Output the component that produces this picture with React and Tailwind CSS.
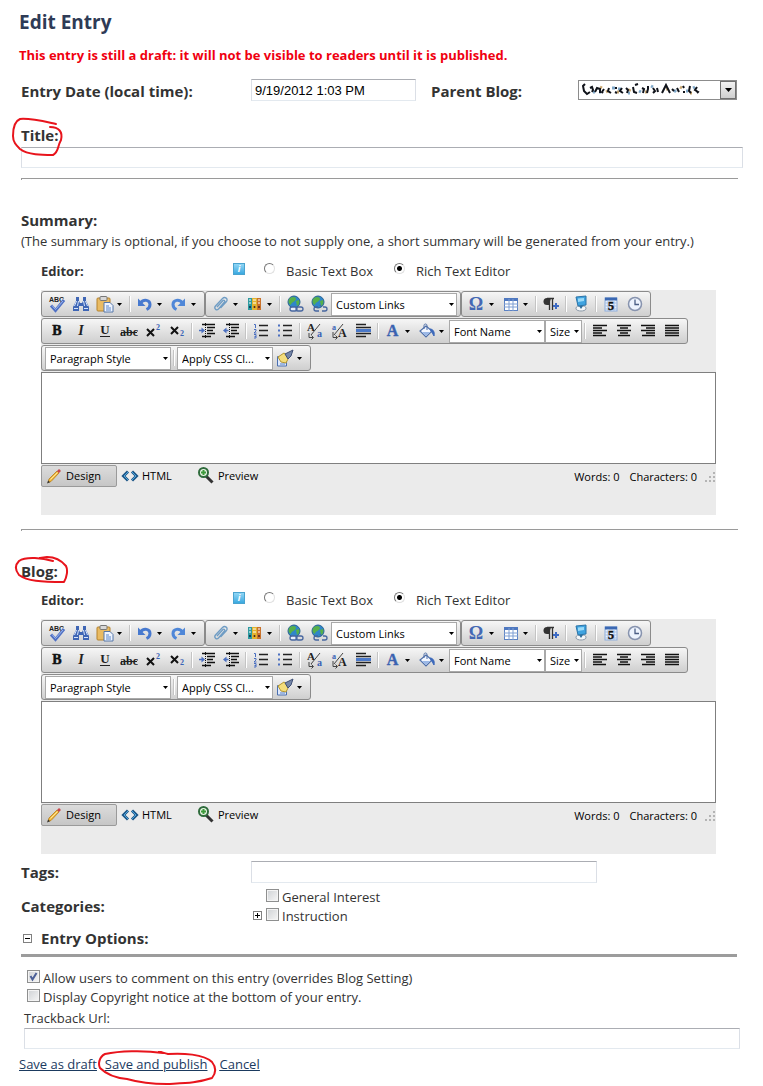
import { useState } from "react";

const serif = { fontFamily: '"Liberation Serif", serif' };

const icons = {
  spell: (
    <>
      <text x="1" y="7" fontSize="7" fontWeight="bold" fill="#222" style={{ fontFamily: '"Liberation Sans", sans-serif' }}>ABC</text>
      <path d="M3 10.5 7.5 15.5 16 5" fill="none" stroke="#4f70c4" strokeWidth="3" />
      <path d="M4 10.5 7.5 14.5 15 6" fill="none" stroke="#9db7ec" strokeWidth="1" />
    </>
  ),
  find: (
    <>
      <path d="M4 2h3v4l1 2h2l1-2V2h3v4l3 6v4h-6v-5H7v5H1v-4l3-6z" fill="#3f66b5" />
      <path d="M4.500 6 2.500 11M6.500 6 5.500 11M11.500 6l1 5M13.500 6l2 5M2 13.500h4M12 13.500h4" stroke="#d6e4fb" strokeWidth="1" />
    </>
  ),
  paste: (
    <>
      <rect x="1" y="3" width="13" height="13" rx="1" fill="#e9bb63" stroke="#b5822c" />
      <rect x="4" y="1.500" width="7" height="4" rx="1" fill="#d8d8d8" stroke="#777" />
      <path d="M8 7.500h6l3 3V17H8z" fill="#eef4ff" stroke="#5577a8" />
      <path d="M10 11h3M10 13h5M10 15h5" stroke="#5b86c9" />
    </>
  ),
  undo: (
    <>
      <path d="M4.500 8C8 3.500 14 5 14 9.500c0 2.500-1.500 4-3.500 5" fill="none" stroke="#4779cf" strokeWidth="3" />
      <path d="M2 3.500V11h7.500z" fill="#4779cf" />
    </>
  ),
  redo: (
    <>
      <path d="M12.500 8C9 3.500 3 5 3 9.500c0 2.500 1.500 4 3.500 5" fill="none" stroke="#4f87d8" strokeWidth="3" />
      <path d="M15 3.500V11H7.500z" fill="#4f87d8" />
    </>
  ),
  clip: (
    <path d="M5 12 11 5.500c1-1 2.500.3 1.500 1.500L6.500 14C4.500 16 1.500 13.500 3.500 11L10.500 3.500C13 1 16.500 4 14.500 6.500L8.500 13" fill="none" stroke="#6e9cc4" strokeWidth="1.300" />
  ),
  library: (
    <>
      <rect x="2" y="3" width="4" height="12" fill="#2d9aa0" />
      <rect x="6" y="3" width="5" height="12" fill="#e2b32d" />
      <rect x="11" y="3" width="4" height="12" fill="#c9722c" />
      <path d="M3 5h2M7 5h3M12 5h2M3 8h2M7 8h3M12 8h2" stroke="#fff" />
      <circle cx="4" cy="12" r="1" fill="#124" />
      <circle cx="8.500" cy="12" r="1" fill="#422" />
      <circle cx="13" cy="12" r="1" fill="#422" />
    </>
  ),
  link: (
    <>
      <circle cx="8" cy="7" r="6" fill="#2f86c9" stroke="#27608f" />
      <path d="M4 3c3-2 6-1 6 1S6 7 4.500 10C2 8 2 5 4 3zM10 6l3-1c1 3 0 5-2 6z" fill="#57b04a" />
      <rect x="4" y="12" width="7" height="4" rx="2" fill="#e8eefb" stroke="#46659f" strokeWidth="1.300" />
      <rect x="10" y="12" width="7" height="4" rx="2" fill="none" stroke="#46659f" strokeWidth="1.300" />
    </>
  ),
  unlink: (
    <>
      <circle cx="8" cy="7" r="6" fill="#2f86c9" stroke="#27608f" />
      <path d="M4 3c3-2 6-1 6 1S6 7 4.500 10C2 8 2 5 4 3zM10 6l3-1c1 3 0 5-2 6z" fill="#57b04a" />
      <path d="M8 12H6a2 2 0 0 0 0 4h3M13 12h2a2 2 0 0 1 0 4h-3M10 10l1 1.500" fill="none" stroke="#46659f" strokeWidth="1.300" />
    </>
  ),
  omega: <text x="8" y="15" fontSize="18" fontWeight="bold" textAnchor="middle" fill="#4468b4" style={serif}>Ω</text>,
  table: (
    <>
      <rect x="2.500" y="3.500" width="13" height="12" fill="#fff" stroke="#5c82c3" />
      <path d="M2 4.500h14" stroke="#4f78c0" strokeWidth="3" />
      <path d="M2 9h14M2 12h14M7 4v12M11 4v12" stroke="#7e9fd3" />
    </>
  ),
  paragraph: (
    <>
      <path d="M9 3H5a3.500 3.500 0 0 0 0 7h2z" fill="#333" />
      <path d="M7.500 3v12M10.500 3v12M5 3.500h7" stroke="#333" strokeWidth="1.300" />
      <path d="M14 8v6M11 11h6" stroke="#3c6ac4" strokeWidth="2" />
    </>
  ),
  module: (
    <>
      <path d="M4 13c0-3 10-3 10 0 1 4-11 4-10 0z" fill="#f4f6f8" stroke="#8c9aa8" />
      <path d="m4 2 10-1v9l-8 1z" fill="#3fa3e0" stroke="#2b74a8" />
      <path d="m6 3.500 6-.5v3l-6 1z" fill="#9adaf8" />
      <path d="m7 11 2 3 2-3z" fill="#2d6f9d" />
    </>
  ),
  calendar: (
    <>
      <rect x="3" y="3" width="12" height="13" fill="#e7effb" stroke="#8daddc" />
      <path d="M3 4h12" stroke="#3b68b3" strokeWidth="3" />
      <path d="M3 8h12M3 11h12M3 14h12M6 5v11M12 5v11" stroke="#a9c1e5" />
      <text x="9" y="15" fontSize="12" fontWeight="bold" textAnchor="middle" fill="#111" stroke="#111" strokeWidth=".4" style={serif}>5</text>
    </>
  ),
  clock: (
    <>
      <circle cx="9" cy="9" r="6.500" fill="#edf3fd" stroke="#8793ae" strokeWidth="1.500" />
      <path d="M9 4.500V9.500h4" fill="none" stroke="#4b5e85" strokeWidth="1.300" />
    </>
  ),
  bold: <text x="9" y="13" fontSize="14" fontWeight="bold" textAnchor="middle" fill="#111" stroke="#111" strokeWidth=".5" style={serif}>B</text>,
  italic: <text x="9" y="13" fontSize="14" fontStyle="italic" fontWeight="bold" textAnchor="middle" fill="#222" style={serif}>I</text>,
  underline: (
    <>
      <text x="9" y="12" fontSize="13" fontWeight="bold" textAnchor="middle" fill="#222" style={serif}>U</text>
      <path d="M4 14.500h10" stroke="#222" />
    </>
  ),
  strike: (
    <>
      <text x="9" y="14" fontSize="12" fontWeight="bold" textAnchor="middle" fill="#222" style={serif}>abc</text>
      <path d="M1 10.500h16" stroke="#222" />
    </>
  ),
  sup: (
    <>
      <path d="m3 7 7 7M10 7l-7 7" stroke="#111" strokeWidth="2" />
      <text x="12" y="8" fontSize="8" fontWeight="bold" fill="#3762b5" style={serif}>2</text>
    </>
  ),
  sub: (
    <>
      <path d="m3 5 7 7M10 5l-7 7" stroke="#111" strokeWidth="2" />
      <text x="12" y="14" fontSize="8" fontWeight="bold" fill="#3762b5" style={serif}>2</text>
    </>
  ),
  indent: (
    <>
      <path d="M4 2.500h13M9 5.500h8M9 8.500h6M9 11.500h8M4 14.500h9" stroke="#111" strokeWidth="1.500" />
      <path d="M7.500 1v16" stroke="#111" strokeDasharray="1 1" />
      <path d="M1 8.500h3" stroke="#4a6fc0" strokeWidth="1.500" />
      <path d="m3.500 5.500 3.500 3-3.500 3z" fill="#4a6fc0" />
    </>
  ),
  outdent: (
    <>
      <path d="M4 2.500h13M9 5.500h8M9 8.500h6M9 11.500h8M4 14.500h9" stroke="#111" strokeWidth="1.500" />
      <path d="M7.500 1v16" stroke="#111" strokeDasharray="1 1" />
      <path d="M3.500 8.500h3" stroke="#4a6fc0" strokeWidth="1.500" />
      <path d="m4.500 5.500-3.500 3 3.500 3z" fill="#4a6fc0" />
    </>
  ),
  ol: (
    <>
      <path d="M7 3.500h9M7 8.500h9M7 13.500h9" stroke="#222" strokeWidth="1.300" />
      <path d="M2 2.500h1.500V6M2 7.500h2v1.500L2 11h2.500M2 12.500h2V16H2M2.500 14.500H4" fill="none" stroke="#4a6fc0" />
    </>
  ),
  ul: (
    <>
      <path d="M7 3.500h9M7 8.500h9M7 13.500h9" stroke="#222" strokeWidth="1.300" />
      <path d="M2 2.500h2v2H2zM2 7.500h2v2H2zM2 12.500h2v2H2z" fill="#4a6fc0" />
    </>
  ),
  lower: (
    <>
      <text x="1" y="9" fontSize="11" fontWeight="bold" fill="#222" style={serif}>A</text>
      <path d="m14 2-9 11" stroke="#444" />
      <text x="11" y="15" fontSize="10" fontWeight="bold" fill="#3762b5" style={serif}>a</text>
      <path d="M3 11v4.500h4M5.500 13.500l2 2-2 2" fill="none" stroke="#444" />
    </>
  ),
  upper: (
    <>
      <text x="2" y="8" fontSize="8" fontWeight="bold" fill="#3762b5" style={serif}>a</text>
      <path d="M13 2 4 13" stroke="#444" />
      <text x="8" y="15" fontSize="12" fontWeight="bold" fill="#222" style={serif}>A</text>
      <path d="M3 10v5.500h4M5.500 13.500l2 2-2 2" fill="none" stroke="#444" />
    </>
  ),
  rule: (
    <>
      <path d="M2 2.500h10M2 5.500h15M2 11.500h15M2 14.500h10" stroke="#222" strokeWidth="1.300" />
      <path d="M2 8.500h15" stroke="#4a78c8" strokeWidth="3" />
    </>
  ),
  color: <text x="8.500" y="14" fontSize="16" fontWeight="bold" textAnchor="middle" fill="#3a62b0" stroke="#3a62b0" strokeWidth=".4" style={serif}>A</text>,
  fill: (
    <>
      <path d="m8 4 6 5-6 6-6-6z" fill="#f3f7ff" stroke="#4f6fa8" strokeWidth="1.200" />
      <path d="M6 7V3.500c0-2 3-2 3 0V8" fill="none" stroke="#4f6fa8" />
      <path d="M12 7c3 0 5 3 4 7-1-1-1-3-2.500-4z" fill="#3c69bb" stroke="#3c69bb" />
      <path d="M3.500 10h9L8 14z" fill="#9bb8e6" />
    </>
  ),
  left: <path d="M2 3.500h14M2 6h9M2 8.500h14M2 11h9M2 13.500h13" stroke="#111" strokeWidth="1.300" />,
  center: <path d="M2 3.500h14M5 6h8M2 8.500h14M5 11h8M3 13.500h12" stroke="#111" strokeWidth="1.300" />,
  right: <path d="M2 3.500h14M7 6h9M2 8.500h14M7 11h9M3 13.500h13" stroke="#111" strokeWidth="1.300" />,
  justify: <path d="M2 3.500h14M2 6h14M2 8.500h14M2 11h14M2 13.500h14" stroke="#111" strokeWidth="1.300" />,
  format: (
    <>
      <path d="M1.500 7.500h9V17h-9z" fill="#dfe9fb" stroke="#4a6fb0" />
      <path d="m2 8 6-4 5 4-3 6-5-1z" fill="#f3dd7c" stroke="#b3952f" />
      <path d="m9 5 4-2 4-2-2 6-3 3z" fill="#7486a8" stroke="#3f4f74" />
      <path d="M4 15h5" stroke="#5b86c9" />
    </>
  ),
  pencil: (
    <>
      <path d="m3 15.500 1-3.500L12 4l2 2-8 8.500z" fill="#f2bb3d" stroke="#b47a1c" strokeWidth=".8" />
      <path d="m12 4 1.500-1.500c1-.6 2.600 1 2 2L14 6z" fill="#c9474a" />
      <path d="m2 16.500 1.200-3L5 15.200z" fill="#333" />
      <path d="m5.500 12.500 7-7" stroke="#fbe3a0" />
    </>
  ),
  html: (
    <>
      <path d="M7 4.500 2.500 9 7 13.500M11 4.500l4.500 4.500-4.500 4.500" fill="none" stroke="#1d5687" strokeWidth="3" />
      <path d="M7 5 3 9l4 4M11 5l4 4-4 4" fill="none" stroke="#4ea6de" strokeWidth="1" />
    </>
  ),
  preview: (
    <>
      <path d="m9 9 6.500 6.500" stroke="#333" strokeWidth="3" />
      <circle cx="6.500" cy="5.500" r="4.500" fill="#eaf6e6" stroke="#2f6b3c" strokeWidth="2" />
      <path d="M6.500 3v5M4 5.500h5" stroke="#3d9a3b" strokeWidth="2" />
    </>
  ),
};

function Icon({ name }) {
  return (
    <svg className="w-[18px] h-[18px] shrink-0" viewBox="0 0 18 18" aria-hidden="true">
      {icons[name]}
    </svg>
  );
}

function Arrow() {
  return (
    <svg className="w-[5px] h-[3px]" viewBox="0 0 5 3" aria-hidden="true">
      <path d="M0 0h5L2.500 3z" fill="#000" />
    </svg>
  );
}

function Tool({ name, menu }) {
  return (
    <button type="button" aria-label={name} className="flex items-center h-full">
      <span className="w-6 flex justify-center">
        <Icon name={name} />
      </span>
      {menu && (
        <span className="w-[10px]">
          <Arrow />
        </span>
      )}
    </button>
  );
}

function Sep() {
  return (
    <span className="w-[6px] h-4 flex justify-center">
      <span className="w-[2px] bg-[#c4c4c4] border-r border-white"></span>
    </span>
  );
}

function ToolSelect({ label, width }) {
  return (
    <span className={`relative h-[23px] ${width}`}>
      <select
        aria-label={label}
        className="appearance-none w-full h-full bg-white border border-[#a9a9a9] pl-1 pt-px text-[11px] text-black truncate"
      >
        <option>{label}</option>
      </select>
      <span className="absolute right-[3px] top-0 h-full flex items-center pointer-events-none">
        <Arrow />
      </span>
    </span>
  );
}

function Group({ children }) {
  return (
    <div className="flex items-center h-[26px] px-[3px] border border-[#8b8b8b] rounded-[3px] bg-gradient-to-b from-[#f6f6f6] to-[#cfcfcf]">
      {children}
    </div>
  );
}

function RichEditor({ id, label, height }) {
  const [mode, setMode] = useState("Design");
  const modes = [
    { name: "Design", icon: "pencil" },
    { name: "HTML", icon: "html" },
    { name: "Preview", icon: "preview" },
  ];

  return (
    <div className="bg-[#ebebeb] text-[11px] text-black">
      <div className="flex flex-col gap-px py-px">
        <div className="flex">
          <Group>
            <Tool name="spell" />
            <Tool name="find" />
            <Tool name="paste" menu />
            <Sep />
            <Tool name="undo" menu />
            <Tool name="redo" menu />
          </Group>
          <Group>
            <Tool name="clip" menu />
            <Tool name="library" menu />
            <Sep />
            <Tool name="link" />
            <Tool name="unlink" />
            <ToolSelect label="Custom Links" width="w-[126px]" />
          </Group>
          <Group>
            <Tool name="omega" menu />
            <Tool name="table" menu />
            <Sep />
            <Tool name="paragraph" />
            <Sep />
            <Tool name="module" />
            <Sep />
            <Tool name="calendar" />
            <Tool name="clock" />
          </Group>
        </div>
        <div className="flex">
          <Group>
            <Tool name="bold" />
            <Tool name="italic" />
            <Tool name="underline" />
            <Tool name="strike" />
            <Tool name="sup" />
            <Tool name="sub" />
            <Sep />
            <Tool name="indent" />
            <Tool name="outdent" />
            <Sep />
            <Tool name="ol" />
            <Tool name="ul" />
            <Sep />
            <Tool name="lower" />
            <Tool name="upper" />
            <Tool name="rule" />
            <Sep />
            <Tool name="color" menu />
            <Tool name="fill" menu />
            <ToolSelect label="Font Name" width="w-24" />
            <ToolSelect label="Size" width="w-[37px]" />
            <Sep />
            <Tool name="left" />
            <Tool name="center" />
            <Tool name="right" />
            <Tool name="justify" />
          </Group>
        </div>
        <div className="flex">
          <Group>
            <ToolSelect label="Paragraph Style" width="w-[126px]" />
            <Sep />
            <ToolSelect label="Apply CSS Cl..." width="w-24" />
            <Tool name="format" menu />
          </Group>
        </div>
      </div>
      <textarea
        id={id}
        aria-label={label}
        className={`block w-full resize-none bg-white border border-[#7f7f7f] p-1 text-sm outline-none ${height}`}
      ></textarea>
      <div className="flex items-start justify-between h-[51px] pt-px">
        <div className="flex">
          {modes.map((m) => (
            <button
              key={m.name}
              type="button"
              onClick={() => setMode(m.name)}
              className={`flex items-center w-[76px] h-[22px] gap-[3px] pl-[3px] border rounded-[2px] ${
                mode === m.name
                  ? "border-[#9a9a9a] bg-gradient-to-b from-[#dcdcdc] to-[#c6c6c6]"
                  : "border-transparent"
              }`}
            >
              <Icon name={m.icon} />
              {m.name}
            </button>
          ))}
        </div>
        <div className="flex items-center h-6">
          <span>Words: 0</span>
          <span className="ml-[10px]">Characters: 0</span>
          <svg className="ml-[7px] w-3 h-3" viewBox="0 0 12 12" aria-hidden="true">
            <path
              d="M9 1h2v2H9zM9 5h2v2H9zM9 9h2v2H9zM5 5h2v2H5zM5 9h2v2H5zM1 9h2v2H1z"
              fill="#b4b4b4"
            />
          </svg>
        </div>
      </div>
    </div>
  );
}

function EditorField({ id, label, height }) {
  const [type, setType] = useState("rich");
  const radio =
    "appearance-none w-[11px] h-[11px] mb-[6px] rounded-full border border-t-[#777] border-l-[#777] border-r-[#e0e0e0] border-b-[#e0e0e0] bg-white checked:bg-[radial-gradient(circle,#000_2px,#fff_3px)]";

  return (
    <div className="ml-5 mr-[27px]">
      <div className="flex items-center h-9 pb-[2px]">
        <span className="w-48 text-[13px] font-bold">Editor:</span>
        <button
          type="button"
          aria-label="Editor help"
          className="w-3 h-3 mb-1 border border-[#4aa3cf] bg-gradient-to-b from-[#8fd6f5] to-[#38a9e0] text-white text-[9px] leading-[10px] italic font-bold"
        >
          i
        </button>
        <input
          type="radio"
          id={`${id}-basic`}
          name={`${id}-type`}
          checked={type === "basic"}
          onChange={() => setType("basic")}
          className={`ml-[19px] ${radio}`}
        />
        <label htmlFor={`${id}-basic`} className="ml-[11px] w-[108px]">
          Basic Text Box
        </label>
        <input
          type="radio"
          id={`${id}-rich`}
          name={`${id}-type`}
          checked={type === "rich"}
          onChange={() => setType("rich")}
          className={radio}
        />
        <label htmlFor={`${id}-rich`} className="ml-[11px]">
          Rich Text Editor
        </label>
      </div>
      <RichEditor id={id} label={label} height={height} />
    </div>
  );
}

function Check({ id, label, defaultChecked }) {
  return (
    <span className="flex items-center h-[19px] gap-[3px]">
      <span className="relative w-[13px] h-[13px] mb-[3px]">
        <input
          type="checkbox"
          id={id}
          defaultChecked={defaultChecked}
          className="peer appearance-none block w-[13px] h-[13px] border border-[#8e8f8f] bg-gradient-to-br from-[#cfd2d5] to-[#f6f6f6] shadow-[inset_0_0_0_1px_#f4f4f4]"
        />
        <svg
          className="absolute inset-0 w-[13px] h-[13px] pointer-events-none hidden peer-checked:block"
          viewBox="0 0 13 13"
          aria-hidden="true"
        >
          <path d="m3.500 6 2 3.500L9.500 3" fill="none" stroke="#4b5f97" strokeWidth="2" />
        </svg>
      </span>
      <label htmlFor={id}>{label}</label>
    </span>
  );
}

function Toggle({ label, open }) {
  return (
    <button
      type="button"
      aria-label={label}
      className="w-[9px] h-[9px] border border-[#808080] bg-white flex items-center justify-center"
    >
      <svg className="w-[5px] h-[5px]" viewBox="0 0 5 5" aria-hidden="true">
        <path d={open ? "M0 2.500h5" : "M0 2.500h5M2.500 0v5"} stroke="#000" />
      </svg>
    </button>
  );
}

const field =
  "block bg-white border border-t-[#abadb3] border-l-[#dbdfe6] border-r-[#dbdfe6] border-b-[#e3e9ef] px-[3px] outline-none";

function Ring({ className, viewBox, d }) {
  return (
    <svg className={`absolute max-w-none pointer-events-none ${className}`} viewBox={viewBox} aria-hidden="true">
      <path d={d} fill="none" stroke="#e8141c" strokeWidth="2" strokeLinecap="round" strokeLinejoin="round" />
    </svg>
  );
}

function Divider() {
  return <hr className="h-[2px] mr-[5px] border-0 border-t border-l border-[#9a9a9a]" />;
}

export default function App() {
  return (
    <form
      className="bg-white text-[#333] text-[13px] leading-5 pt-[10px] pb-3 pl-[19px] pr-5 font-['Open_Sans','Noto_Sans',sans-serif]"
      onSubmit={(e) => e.preventDefault()}
    >
      <h1 className="text-[19px] leading-6 font-bold text-[#2e3b56]">Edit Entry</h1>
      <p className="mt-[11px] font-bold text-[#f00010]">
        This entry is still a draft: it will not be visible to readers until it is published.
      </p>

      <div className="pl-[2px]">
        <div className="mt-3 flex items-center h-7 text-[15px] font-bold">
          <label htmlFor="date" className="w-[230px]">
            Entry Date (local time):
          </label>
          <input
            id="date"
            type="text"
            defaultValue="9/19/2012 1:03 PM"
            className={`w-[165px] h-[22px] mb-[2px] text-[13px] font-normal text-black font-['Liberation_Sans',sans-serif] ${field}`}
          />
          <label htmlFor="parent" className="ml-[15px] w-[147px]">
            Parent Blog:
          </label>
          <span className="relative w-[159px] h-5 mb-[2px]">
            <select id="parent" className="appearance-none w-full h-full bg-white border border-[#8c8c8c]">
              <option></option>
            </select>
            <svg
              className="absolute left-1 top-[3px] w-[122px] h-[14px] pointer-events-none"
              viewBox="0 0 122 14"
              aria-hidden="true"
            >
              <g fill="none" strokeWidth="2">
                <path d="M11 9h2M17 9h2M30 5h3M36 6h3M46 10h2M57 8l2 1M69 3l2 1M92 9l2-2M104 8h2M111 5l2-1" stroke="#7fa8c9" strokeWidth="3" />
                <path d="M18 4l2 1M24 9l2-1M35 9h2M47 8l1-2M63 9h2M84 6h2M98 4l2 1M108 10h2" stroke="#caa872" strokeWidth="3" />
                <path
                  d="M3 1 1 3l1 5 3 3 3-2M8 5l2-1 1 3-1 2M13 9l2-4 3 1v4M22 6l-2 3 1 1M27 5l-1 3 3 2M33 5h2M33 9l2 1M40 5l-2 3 3 2M44 5l2 2-1 3M53 2l3-1M51 4l1 5 3 1M60 5l2 1-1 4M66 3v3l-1 4M71 5l2 3-2 2M75 5l1 4M80 10l2-4 2-4 4 8M90 6l2 2M95 5l2 4M101 3l1 2M101 9h2M108 3l-1 5 2 2M115 4l-2 3 3 2-1 1"
                  stroke="#10131a"
                />
              </g>
            </svg>
            <span className="absolute right-px top-px w-4 h-[18px] border border-[#707070] bg-gradient-to-b from-[#f2f2f2] to-[#cfcfcf] flex items-center justify-center pointer-events-none">
              <svg className="w-[7px] h-1" viewBox="0 0 7 4" aria-hidden="true">
                <path d="M0 0h7L3.500 4z" />
              </svg>
            </span>
          </span>
        </div>

        <div className="mt-[18px] relative">
          <label htmlFor="title" className="block text-[15px] leading-6 font-bold">
            Title:
          </label>
          <input id="title" type="text" className={`w-full h-[21px] ${field}`} />
          <Ring
            className="-left-[10px] -top-[7px] w-[54px] h-[42px]"
            viewBox="11 116 54 42"
            d="M56 124C42 121 30 118 20 119c-5 2-7 9-7 17 0 6 3 9 7 13 8 6 22 6 33 6 6-3 4-8 8-15 2-8-2-13-11-13"
          />
        </div>

        <div className="mt-[10px]">
          <Divider />
        </div>

        <section className="mt-7">
          <h2 className="text-[15px] leading-6 font-bold">Summary:</h2>
          <p className="leading-[18px] pb-1">
            (The summary is optional, if you choose to not supply one, a short summary will be generated from your entry.)
          </p>
          <EditorField id="summary" label="Summary" height="h-[92px]" />
        </section>

        <div className="mt-[14px]">
          <Divider />
        </div>

        <section className="mt-7 relative">
          <h2 className="text-[15px] leading-6 font-bold">Blog:</h2>
          <EditorField id="blog" label="Blog" height="h-[102px]" />
          <Ring
            className="-left-[8px] -top-[4px] w-[58px] h-[30px]"
            viewBox="13 555 58 30"
            d="M53 561c-10-3-27-5-34 0-4 4-4 9 0 14 8 6 22 7 45 7 3-5 4-12 2-16-5-6-12-9-19-9l-7 1"
          />
        </section>

        <div className="mt-1 flex items-center h-7">
          <label htmlFor="tags" className="w-[230px] text-[15px] font-bold">
            Tags:
          </label>
          <input id="tags" type="text" className={`w-[346px] h-[22px] ${field}`} />
        </div>

        <div className="mt-px flex items-center">
          <span className="w-[230px] text-[15px] font-bold">Categories:</span>
          <div>
            <div className="pl-[15px]">
              <Check id="general" label="General Interest" />
            </div>
            <div className="flex items-center gap-1 pl-[2px]">
              <Toggle label="Expand Instruction" />
              <Check id="instruction" label="Instruction" />
            </div>
          </div>
        </div>

        <div className="mt-px flex items-center gap-[9px] pl-[2px]">
          <Toggle label="Collapse Entry Options" open />
          <h2 className="text-[15px] leading-6 font-bold">Entry Options:</h2>
        </div>
        <hr className="mt-1 mr-[6px] h-[3px] border-0 bg-[#9c9c9c]" />

        <div className="mt-[11px] pl-[6px]">
          <Check id="comments" label="Allow users to comment on this entry (overrides Blog Setting)" defaultChecked />
          <Check id="copyright" label="Display Copyright notice at the bottom of your entry." />
        </div>

        <div className="mt-[3px] pl-[3px] pr-[3px]">
          <label htmlFor="trackback" className="block leading-[19px]">
            Trackback Url:
          </label>
          <input id="trackback" type="text" className={`w-full h-[21px] ${field}`} />
        </div>
      </div>

      <div className="mt-[5px] flex gap-2 text-[#1b3a5f] underline">
        <a href="#draft">Save as draft</a>
        <span className="relative">
          <a href="#publish">Save and publish</a>
          <Ring
            className="-left-[8px] -top-[5px] w-[122px] h-[38px]"
            viewBox="97 1049 122 38"
            d="M163 1053c-20-3-44-2-58 1-6 3-7 10-5 14 6 6 16 10 27 11 14 4 26 5 40 5 18-1 30-1 45-6 4-5 4-11 0-16-8-8-30-9-44-8-4-1-6-2-9-2"
          />
        </span>
        <a href="#cancel" className="ml-1">
          Cancel
        </a>
      </div>
    </form>
  );
}
